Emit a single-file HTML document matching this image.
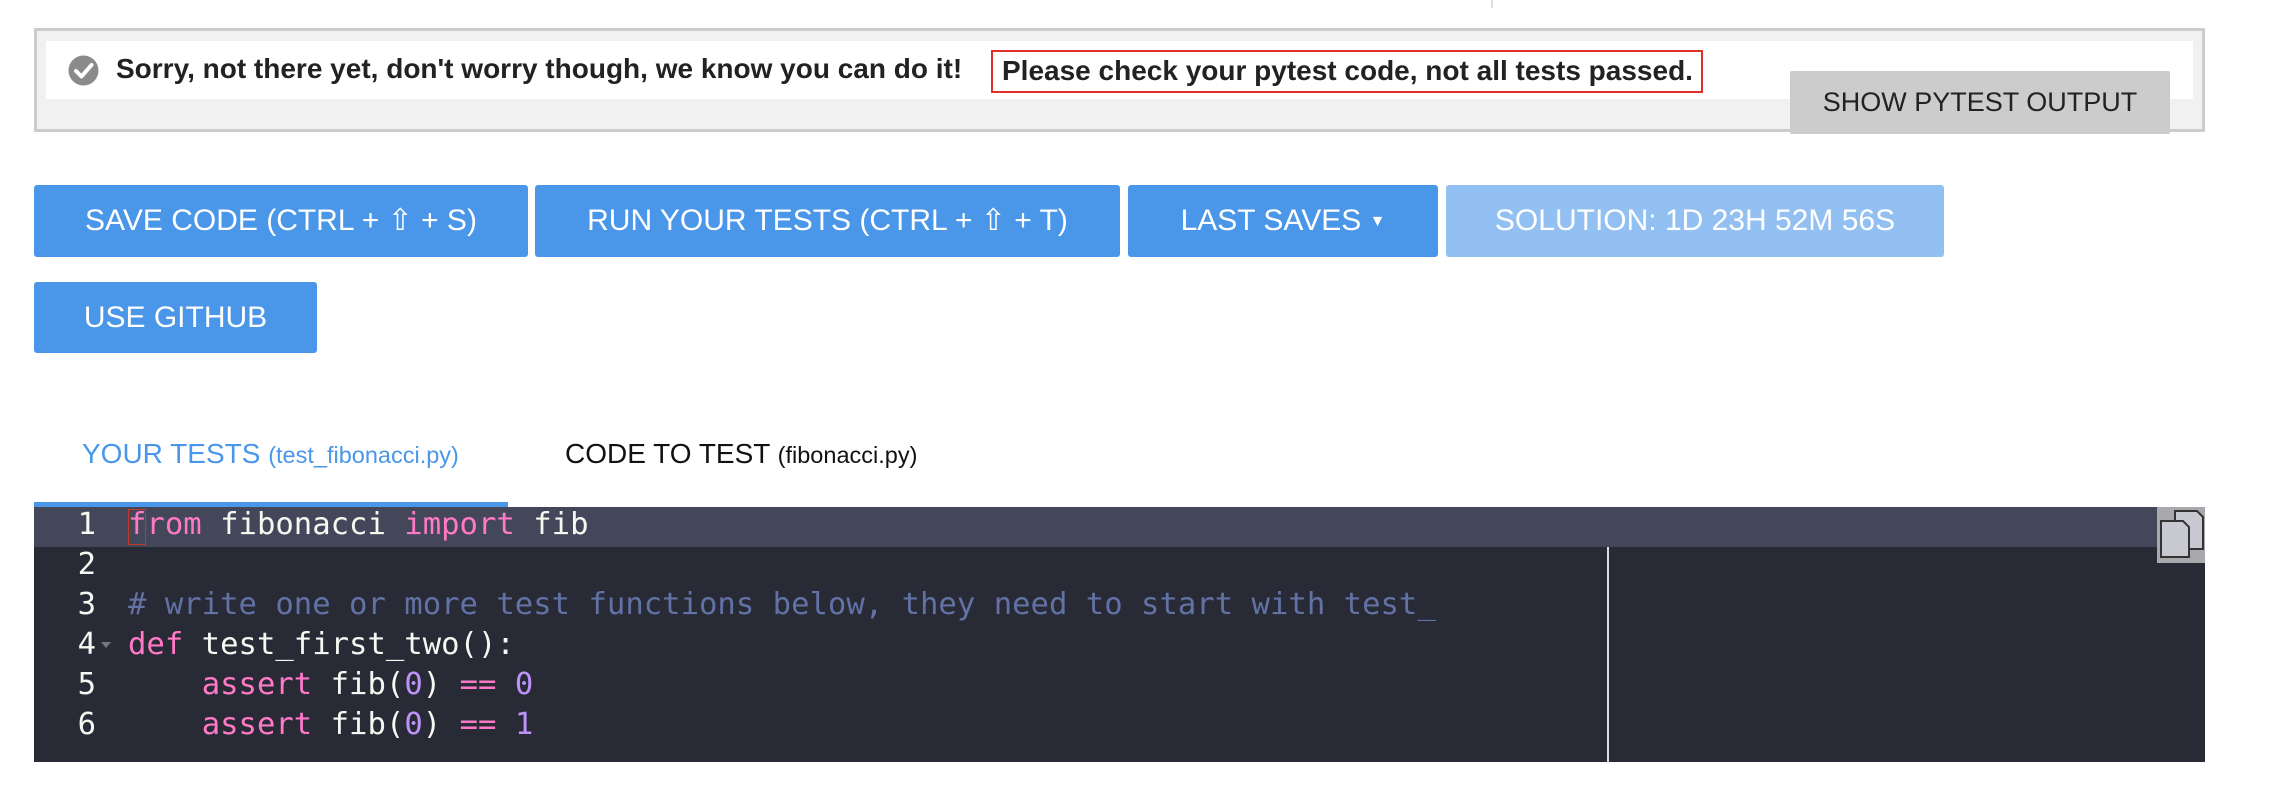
<!DOCTYPE html>
<html><head><meta charset="utf-8"><style>
*{margin:0;padding:0;box-sizing:border-box}
body{width:2276px;height:762px;background:#fff;position:relative;overflow:hidden;font-family:"Liberation Sans",Arial,sans-serif}
.abs{position:absolute}
.vline{left:1491px;top:0;width:2px;height:8px;background:#ddd}
.alert{left:34px;top:28px;width:2171px;height:104px;border:3px solid #ccc;background:#f1f1f1}
.inner{left:46px;top:41px;width:2147px;height:58px;background:#fff}
.msg{left:116px;top:53px;font-weight:bold;font-size:28px;color:#222;white-space:nowrap}
.red{left:991px;top:50px;width:712px;height:43px;border:2px solid #e0302a;font-weight:bold;font-size:28px;color:#222;padding:3px 0 0 9px;white-space:nowrap}
.pyt{left:1790px;top:71px;width:380px;height:63px;background:#ccc;border-radius:2px;font-size:27px;color:#222;text-align:center;line-height:63px}
.btn{background:#4a96e8;color:#fff;font-size:30px;text-align:center;border-radius:3px;white-space:nowrap}
.tab{font-size:28px;white-space:nowrap}
.tab small{font-size:23.5px}
.ed{left:34px;top:507px;width:2171px;height:255px;background:#282a36}
.act{left:34px;top:507px;width:2171px;height:40px;background:#44475a}
.code{left:34px;top:505px;font-family:"DejaVu Sans Mono","Liberation Mono",monospace;font-size:30.6px;color:#f8f8f2;white-space:pre;line-height:40px}
.ln{position:absolute;left:0;width:62px;text-align:right}
.tx{position:absolute;left:94px}
.k{color:#ff79c6}.c{color:#6272a4}.n{color:#bd93f9}
</style></head><body>
<div class="abs vline"></div>
<div class="abs alert"></div>
<div class="abs inner"></div>
<svg class="abs" style="left:68px;top:55px" width="31" height="31" viewBox="0 0 31 31"><circle cx="15.5" cy="15.5" r="15" fill="#8a8a8a"/><path d="M8 16 L13.5 21.5 L23.5 10" stroke="#fff" stroke-width="4" fill="none" stroke-linecap="round" stroke-linejoin="round"/></svg>
<div class="abs msg">Sorry, not there yet, don't worry though, we know you can do it!</div>
<div class="abs red">Please check your pytest code, not all tests passed.</div>
<div class="abs pyt">SHOW PYTEST OUTPUT</div>

<div class="abs btn" style="left:34px;top:185px;width:494px;height:72px;line-height:72px">SAVE CODE (CTRL + ⇧ + S)</div>
<div class="abs btn" style="left:535px;top:185px;width:585px;height:72px;line-height:72px">RUN YOUR TESTS (CTRL + ⇧ + T)</div>
<div class="abs btn" style="left:1128px;top:185px;width:310px;height:72px;line-height:72px">LAST SAVES <span style="font-size:16px;vertical-align:4px">▼</span></div>
<div class="abs btn" style="left:1446px;top:185px;width:498px;height:72px;line-height:72px;background:#93c0f3">SOLUTION: 1D 23H 52M 56S</div>
<div class="abs btn" style="left:34px;top:282px;width:283px;height:71px;line-height:71px">USE GITHUB</div>

<div class="abs tab" style="left:82px;top:438px;color:#4a96e8">YOUR TESTS <small>(test_fibonacci.py)</small></div>
<div class="abs tab" style="left:565px;top:438px;color:#111">CODE TO TEST <small>(fibonacci.py)</small></div>
<div class="abs" style="left:34px;top:502px;width:474px;height:5px;background:#4a96e8"></div>

<div class="abs ed"></div>
<div class="abs act"></div>
<div class="abs" style="left:1607px;top:547px;width:2px;height:215px;background:#ddd"></div>
<div class="abs" style="left:128px;top:509px;width:18px;height:36px;border:1px solid #c0392b"></div>
<div class="abs code">
<div class="ln" style="top:0">1</div><div class="tx" style="top:0"><span class="k">from</span> fibonacci <span class="k">import</span> fib</div>
<div class="ln" style="top:40px">2</div>
<div class="ln" style="top:80px">3</div><div class="tx" style="top:80px"><span class="c"># write one or more test functions below, they need to start with test_</span></div>
<div class="ln" style="top:120px">4</div><div class="tx" style="top:120px"><span class="k">def</span> test_first_two():</div>
<div class="ln" style="top:160px">5</div><div class="tx" style="top:160px">    <span class="k">assert</span> fib(<span class="n">0</span>) <span class="k">==</span> <span class="n">0</span></div>
<div class="ln" style="top:200px">6</div><div class="tx" style="top:200px">    <span class="k">assert</span> fib(<span class="n">0</span>) <span class="k">==</span> <span class="n">1</span></div>
</div>
<div class="abs" style="left:101px;top:642px;width:0;height:0;border-left:5px solid transparent;border-right:5px solid transparent;border-top:6px solid #777"></div>
<div class="abs" style="left:2157px;top:507px;width:48px;height:56px;background:#a9a9ad"></div>
<svg class="abs" style="left:2157px;top:507px" width="48" height="56" viewBox="0 0 48 56"><path d="M18 4 H40 L46 10 V42 H18 Z" fill="#c8c8d0" stroke="#333" stroke-width="2"/><path d="M4 14 H26 L32 20 V50 H4 Z" fill="#c8c8d0" stroke="#333" stroke-width="2"/></svg>
</body></html>
